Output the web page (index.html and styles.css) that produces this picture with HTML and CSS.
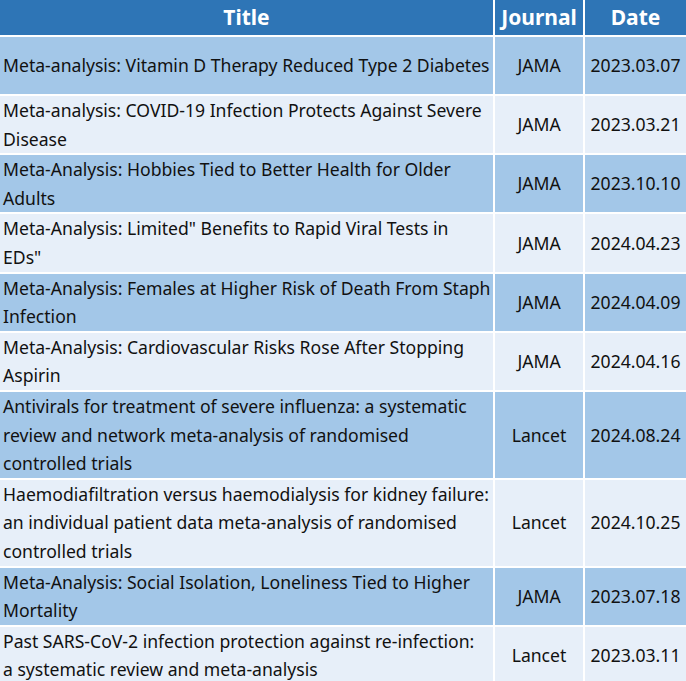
FILE: index.html
```html
<!DOCTYPE html>
<html>
<head>
<meta charset="utf-8">
<link rel="stylesheet" href="styles.css">
</head>
<body>
<div class="wrap">
<table class="tbl">
  <thead>
    <tr><th class="c-title">Title</th><th class="c-journal">Journal</th><th class="c-date">Date</th></tr>
  </thead>
  <tbody>
    <tr class="dark"><td class="title">Meta-analysis: Vitamin D Therapy Reduced Type 2 Diabetes</td><td class="mid">JAMA</td><td class="mid">2023.03.07</td></tr>
    <tr class="light"><td class="title">Meta-analysis: COVID-19 Infection Protects Against Severe Disease</td><td class="mid">JAMA</td><td class="mid">2023.03.21</td></tr>
    <tr class="dark"><td class="title">Meta-Analysis: Hobbies Tied to Better Health for Older Adults</td><td class="mid">JAMA</td><td class="mid">2023.10.10</td></tr>
    <tr class="light"><td class="title">Meta-Analysis: Limited" Benefits to Rapid Viral Tests in<br>EDs"</td><td class="mid">JAMA</td><td class="mid">2024.04.23</td></tr>
    <tr class="dark"><td class="title">Meta-Analysis: Females at Higher Risk of Death From Staph Infection</td><td class="mid">JAMA</td><td class="mid">2024.04.09</td></tr>
    <tr class="light"><td class="title">Meta-Analysis: Cardiovascular Risks Rose After Stopping Aspirin</td><td class="mid">JAMA</td><td class="mid">2024.04.16</td></tr>
    <tr class="dark"><td class="title">Antivirals for treatment of severe influenza: a systematic review and network meta-analysis of randomised controlled trials</td><td class="mid">Lancet</td><td class="mid">2024.08.24</td></tr>
    <tr class="light"><td class="title">Haemodiafiltration versus haemodialysis for kidney failure: an individual patient data meta-analysis of randomised controlled trials</td><td class="mid">Lancet</td><td class="mid">2024.10.25</td></tr>
    <tr class="dark"><td class="title">Meta-Analysis: Social Isolation, Loneliness Tied to Higher Mortality</td><td class="mid">JAMA</td><td class="mid">2023.07.18</td></tr>
    <tr class="light"><td class="title">Past SARS-CoV-2 infection protection against re-infection: a&nbsp;systematic review and meta-analysis</td><td class="mid">Lancet</td><td class="mid">2023.03.11</td></tr>
  </tbody>
</table>
</div>
</body>
</html>
```
FILE: styles.css
```css
html, body {
  margin: 0;
  padding: 0;
  background: #ffffff;
}
.wrap {
  width: 686px;
  overflow: hidden;
}
.tbl {
  margin: -2px;
  border-collapse: separate;
  border-spacing: 2px;
  table-layout: fixed;
  width: 690px;
  font-family: "Noto Sans", "Open Sans", sans-serif;
  color: #111111;
}
.c-title { width: 493px; }
.c-journal { width: 88px; }
.c-date { width: 101px; }
th {
  background: #2e75b6;
  color: #ffffff;
  font-weight: bold;
  font-size: 21px;
  height: 35px;
  padding: 0;
  text-align: center;
  vertical-align: middle;
  line-height: 35px;
}
td {
  font-size: 17.6px;
  line-height: 28.6px;
  height: 57px;
  padding: 0 0 0 3px;
  vertical-align: middle;
}
td.mid {
  text-align: center;
  padding: 0;
}
tr.dark td { background: #a3c7e8; }
tr.light td { background: #e7eff9; }
```
